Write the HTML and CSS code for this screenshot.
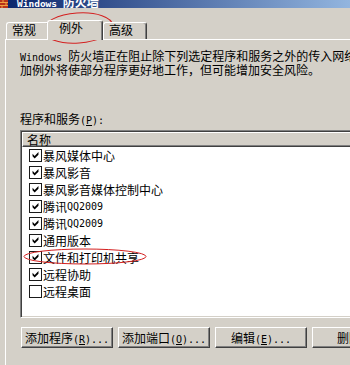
FILE: index.html
```html
<!DOCTYPE html>
<html lang="zh-CN">
<head>
    <meta charset="UTF-8">
    <meta name="viewport" content="width=device-width, initial-scale=1.0">
    <title>Windows 防火墙</title><link rel="stylesheet" href="styles.css">
</head>
<body>
    <svg class="defs" width="0" height="0">
        <symbol id="check" viewBox="0 0 13 13">
            <polygon points="3,4.5 5.5,7 10,2.5 10,5.5 5.5,10 3,7.5" fill="#000"/>
        </symbol>
    </svg>

    <div class="window">
        <div class="titlebar">
            <svg class="title-icon" width="8" height="8" viewBox="0 0 8 8">
                <rect width="8" height="8" fill="#b8321a"/>
                <path d="M0 2.5h8M0 5.5h8M3 0v2.5M6 2.5v3M2 5.5v3" stroke="#f0a040" stroke-width="1"/>
            </svg>
            <span class="title-text"><span class="en">Windows </span>防火墙</span>
        </div>

        <div class="tabs">
            <div class="tab">常规</div>
            <div class="tab active">例外</div>
            <div class="tab">高级</div>
        </div>

        <div class="panel">
            <p class="desc">
                <span class="line"><span class="en">Windows </span>防火墙正在阻止除下列选定程序和服务之外的传入网络连接。添</span>
                <span class="line">加例外将使部分程序更好地工作，但可能增加安全风险。</span>
            </p>

            <div class="label">程序和服务<span class="en">(<u>P</u>):</span></div>

            <div class="listbox">
                <div class="list-header">名称</div>
                <ul class="items">
                    <li><svg class="cb"><use href="#check"/></svg>暴风媒体中心</li>
                    <li><svg class="cb"><use href="#check"/></svg>暴风影音</li>
                    <li><svg class="cb"><use href="#check"/></svg>暴风影音媒体控制中心</li>
                    <li><svg class="cb"><use href="#check"/></svg>腾讯<span class="en">QQ2009</span></li>
                    <li><svg class="cb"><use href="#check"/></svg>腾讯<span class="en">QQ2009</span></li>
                    <li><svg class="cb"><use href="#check"/></svg>通用版本</li>
                    <li><svg class="cb"><use href="#check"/></svg>文件和打印机共享</li>
                    <li><svg class="cb"><use href="#check"/></svg>远程协助</li>
                    <li><svg class="cb"></svg>远程桌面</li>
                </ul>
            </div>

            <div class="buttons">
                <button class="btn">添加程序<span class="en">(<u>R</u>)...</span></button>
                <button class="btn">添加端口<span class="en">(<u>O</u>)...</span></button>
                <button class="btn">编辑<span class="en">(<u>E</u>)...</span></button>
                <button class="btn">删除<span class="en">(<u>D</u>)</span></button>
            </div>
        </div>
    </div>

    <!-- red marks drawn over the screenshot -->
    <svg class="marks" width="350" height="365">
        <ellipse cx="78" cy="28" rx="35" ry="15" transform="rotate(-4 78 28)"/>
        <ellipse cx="85" cy="256.5" rx="61" ry="7.5"/>
    </svg>
</body>
</html>
```

FILE: styles.css
```css
/* styles.css */
body {
    margin: 0;
    background-color: #d4d0c8;
    font-family: "Noto Sans CJK SC", sans-serif;
    font-size: 12px;
    color: #000;
    overflow: hidden;
}

.defs {
    position: absolute;
}

.en {
    font-family: "DejaVu Sans Mono", monospace;
    font-size: 10px;
    line-height: 1;
}

.window {
    width: 420px;
}

.titlebar {
    height: 8px;
    width: 400px;
    overflow: hidden;
    display: flex;
    align-items: flex-end;
    background: linear-gradient(to right, #0a246a, #a6caf0);
}

.title-icon {
    flex: none;
    margin-right: 9px;
    align-self: flex-start;
}

.title-text {
    color: #fff;
    font-weight: bold;
    line-height: 12px;
    white-space: nowrap;
}

.title-text .en {
    font-size: 9.5px;
}

.tabs {
    height: 31px;
    display: flex;
    align-items: flex-end;
    padding-left: 6px;
    position: relative;
    z-index: 1;
}

.tab {
    height: 17px;
    box-sizing: border-box;
    border: 1px solid #fff;
    border-bottom: none;
    border-right-color: #404040;
    border-radius: 3px 3px 0 0;
    box-shadow: inset -1px 0 #808080;
    padding: 0 13px 0 5px;
    line-height: 14px;
    background-color: #d4d0c8;
}

.tab.active {
    height: 20px;
    margin: 0 0 -1px -3px;
    padding: 0 19px 0 11px;
}

.panel {
    margin-left: 5px;
    border-top: 1px solid #fff;
    border-left: 1px solid #fff;
    padding: 9px 0 0 14px;
    height: 400px;
}

.desc {
    margin: 0;
    line-height: 14px;
}

.desc .line {
    display: block;
    white-space: nowrap;
}

.label {
    margin-top: 35px;
    line-height: 14px;
    height: 14px;
}

.listbox {
    margin-top: 4px;
    height: 188px;
    width: 420px;
    box-sizing: border-box;
    border: 1px solid;
    border-color: #808080 #fff #fff #808080;
    padding: 1px;
    box-shadow: inset 1px 1px #404040, inset -1px -1px #d4d0c8;
    background-color: #fff;
}

.list-header {
    height: 15px;
    box-sizing: border-box;
    border-top: 1px solid #fff;
    border-left: 1px solid #fff;
    border-bottom: 1px solid #404040;
    box-shadow: inset 0 -1px #808080;
    background-color: #d4d0c8;
    padding-left: 4px;
    line-height: 13px;
}

.items {
    list-style: none;
    margin: 0;
    padding: 0;
}

.items li {
    height: 17px;
    display: flex;
    align-items: center;
    padding-left: 7px;
    white-space: nowrap;
}

.cb {
    width: 13px;
    height: 13px;
    flex: none;
    box-sizing: border-box;
    border: 1px solid #1a1a1a;
    margin-right: 1px;
    background-color: #fff;
}

.buttons {
    display: flex;
    gap: 5px;
    margin-top: 9px;
    padding-left: 1px;
}

.btn {
    flex: none;
    width: 92px;
    height: 21px;
    box-sizing: border-box;
    padding: 0;
    border: 1px solid;
    border-color: #fff #404040 #404040 #fff;
    box-shadow: inset -1px -1px #808080;
    background-color: #d4d0c8;
    font-family: inherit;
    font-size: 12px;
    line-height: 17px;
    color: #000;
    white-space: nowrap;
}

.marks {
    position: absolute;
    top: 0;
    left: 0;
    pointer-events: none;
}

.marks ellipse {
    fill: none;
    stroke: #d42020;
    stroke-width: 1;
}
```
